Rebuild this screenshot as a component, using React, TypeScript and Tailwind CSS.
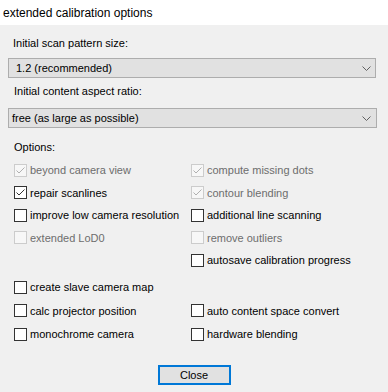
import React from "react";

type Opt = { label: string; checked?: boolean; disabled?: boolean };

const Check = ({ checked, disabled }: { checked?: boolean; disabled?: boolean }) => (
  <span
    className={`w-[13px] h-[13px] flex-shrink-0 border flex items-center justify-center ${
      disabled ? "border-[#cccccc] bg-[#f7f7f7]" : "border-[#333333] bg-white"
    }`}
  >
    {checked && (
      <svg width="11" height="11" viewBox="0 0 11 11">
        <path
          d="M1.5 5.5 L4 8 L9.5 2.5"
          fill="none"
          stroke={disabled ? "#b0b0b0" : "#333333"}
          strokeWidth="1"
        />
      </svg>
    )}
  </span>
);

const Option = ({ label, checked, disabled }: Opt) => (
  <div className="flex items-center gap-[3px] h-full whitespace-nowrap">
    <Check checked={checked} disabled={disabled} />
    <span className={disabled ? "text-[#6d6d6d]" : "text-black"}>{label}</span>
  </div>
);

const Chevron = () => (
  <svg width="9" height="5" viewBox="0 0 9 5" className="flex-shrink-0">
    <path d="M0.5 0.5 L4.5 4.5 L8.5 0.5" fill="none" stroke="#606060" strokeWidth="1" />
  </svg>
);

const rowsTop: [Opt | null, Opt | null][] = [
  [{ label: "beyond camera view", checked: true, disabled: true }, { label: "compute missing dots", checked: true, disabled: true }],
  [{ label: "repair scanlines", checked: true }, { label: "contour blending", checked: true, disabled: true }],
  [{ label: "improve low camera resolution" }, { label: "additional line scanning" }],
  [{ label: "extended LoD0", disabled: true }, { label: "remove outliers", disabled: true }],
  [null, { label: "autosave calibration progress" }],
];

const rowsBottom: [Opt | null, Opt | null][] = [
  [{ label: "create slave camera map" }, null],
  [{ label: "calc projector position" }, { label: "auto content space convert" }],
  [{ label: "monochrome camera" }, { label: "hardware blending" }],
];

export default function App() {
  return (
    <div
      className="w-[388px] h-[392px] bg-[#f0f0f0] text-[11px] leading-[16px] text-black overflow-hidden"
      style={{ fontFamily: "'Liberation Sans', Arial, sans-serif" }}
    >
      {/* Title bar */}
      <div className="h-[25px] bg-white flex items-center pl-[3px] text-[12px]">
        extended calibration options
      </div>

      <div className="pl-[13px] mt-[10px]">Initial scan pattern size:</div>
      <div className="mx-[8px] mt-[7px] w-[368px] h-[20px] border border-[#adadad] bg-[#e1e1e1] flex items-center justify-between pl-[7px] pr-[4px]">
        <span>1.2 (recommended)</span>
        <Chevron />
      </div>

      <div className="pl-[14px] mt-[5px]">Initial content aspect ratio:</div>
      <div className="mx-[8px] mt-[9px] w-[369px] h-[20px] border border-[#adadad] bg-[#e1e1e1] flex items-center justify-between pl-[3px] pr-[5px]">
        <span>free (as large as possible)</span>
        <Chevron />
      </div>

      <div className="pl-[14px] mt-[11px]">Options:</div>

      <div className="mt-[4px] pl-[14px] grid grid-cols-[177px_1fr]">
        {rowsTop.map(([l, r], i) => (
          <React.Fragment key={i}>
            <div className="h-[22.5px]">{l && <Option {...l} />}</div>
            <div className="h-[22.5px]">{r && <Option {...r} />}</div>
          </React.Fragment>
        ))}
      </div>

      <div className="mt-[4px] pl-[14px] grid grid-cols-[177px_1fr]">
        {rowsBottom.map(([l, r], i) => (
          <React.Fragment key={i}>
            <div className="h-[23.5px]">{l && <Option {...l} />}</div>
            <div className="h-[23.5px]">{r && <Option {...r} />}</div>
          </React.Fragment>
        ))}
      </div>

      <div className="flex justify-center mt-[19px]">
        <button className="w-[73px] h-[20px] border-2 border-[#0078d7] bg-[#e1e1e1] flex items-center justify-center">
          Close
        </button>
      </div>
    </div>
  );
}
